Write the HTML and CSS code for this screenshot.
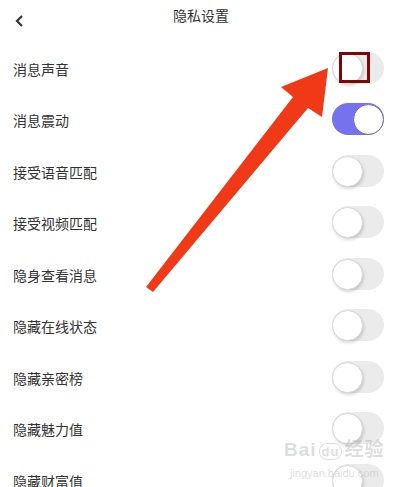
FILE: index.html
```html
<!DOCTYPE html>
<html>

<head>
  <meta charset="UTF-8">
  <title>隐私设置</title>
  <link rel="stylesheet" href="styles.css">
</head>

<body>
  <div class="page">
    <div class="header">
      <span class="back">
        <svg width="9" height="12" viewBox="0 0 9 12"><path d="M7 1 L2 6 L7 11" fill="none" stroke="#333" stroke-width="2.2"/></svg>
      </span>
      <span class="title">隐私设置</span>
    </div>

    <div class="list">
      <div class="row"><span class="label">消息声音</span><span class="switch"><i class="knob"></i></span></div>
      <div class="row"><span class="label">消息震动</span><span class="switch on"><i class="knob"></i></span></div>
      <div class="row"><span class="label">接受语音匹配</span><span class="switch"><i class="knob"></i></span></div>
      <div class="row"><span class="label">接受视频匹配</span><span class="switch"><i class="knob"></i></span></div>
      <div class="row"><span class="label">隐身查看消息</span><span class="switch"><i class="knob"></i></span></div>
      <div class="row"><span class="label">隐藏在线状态</span><span class="switch"><i class="knob"></i></span></div>
      <div class="row"><span class="label">隐藏亲密榜</span><span class="switch"><i class="knob"></i></span></div>
      <div class="row"><span class="label">隐藏魅力值</span><span class="switch"><i class="knob"></i></span></div>
      <div class="row"><span class="label">隐藏财富值</span><span class="switch"><i class="knob"></i></span></div>
    </div>

    <!-- annotation drawn over the screen -->
    <svg class="arrow" width="402" height="487" viewBox="0 0 402 487">
      <polygon points="328,68 281,87 293,97 146,287 153,292 308,108 322,117" fill="#f03a17"/>
    </svg>
    <div class="mark"></div>

    <div class="watermark">
      <div class="wm-logo">Bai<span class="wm-du">du</span>经验</div>
      <div class="wm-url">jingyan.baidu.com</div>
    </div>
  </div>
</body>

</html>
```
FILE: styles.css
```css
body {
  margin: 0;
  background-color: white;
  font-family: "Noto Sans CJK SC", "Noto Sans", sans-serif;
  color: #333;
}

.page {
  position: relative;
  width: 402px;
  height: 487px;
  overflow: hidden;
}

.header {
  position: relative;
  height: 30px;
  display: flex;
  justify-content: center;
  align-items: center;
}

.back {
  position: absolute;
  left: 15px;
  top: 8px;
}

.title {
  font-size: 14px;
  color: #333;
  margin-top: -1px;
}

.list {
  margin-top: 13px;
}

.row {
  height: 51.5px;
  display: flex;
  align-items: center;
  justify-content: space-between;
  padding: 0 18px 0 13px;
}

.label {
  font-size: 14px;
  color: #333;
}

.switch {
  width: 52px;
  height: 32px;
  border-radius: 16px;
  background-color: #ebebeb;
  position: relative;
  margin-top: -2px;
}

.knob {
  position: absolute;
  left: 0;
  top: 1px;
  width: 29px;
  height: 29px;
  border-radius: 50%;
  background-color: white;
  border: 0.5px solid #d8d8d8;
  box-shadow: 1px 2px 3px rgba(0, 0, 0, 0.15);
}

.switch.on {
  background-color: #7672ee;
}

.switch.on .knob {
  left: auto;
  right: 0;
  border: 1px solid #6f69d8;
  box-shadow: none;
}

.arrow {
  position: absolute;
  left: 0;
  top: 0;
}

.mark {
  position: absolute;
  left: 339px;
  top: 52px;
  width: 25px;
  height: 25px;
  border: 3px solid #7d0606;
}

.watermark {
  position: absolute;
  left: 284px;
  top: 440px;
  color: rgba(180, 180, 180, 0.45);
  font-family: "Liberation Sans", "Noto Sans CJK SC", sans-serif;
  text-align: center;
}

.wm-logo {
  font-size: 19px;
  font-weight: bold;
  line-height: 20px;
  letter-spacing: 1px;
}

.wm-du {
  font-size: 13px;
  border: 1px solid rgba(180, 180, 180, 0.45);
  border-radius: 8px;
  padding: 0 2px;
  margin: 0 2px;
}

.wm-url {
  font-size: 11px;
  line-height: 14px;
  margin-top: 4px;
}
```
